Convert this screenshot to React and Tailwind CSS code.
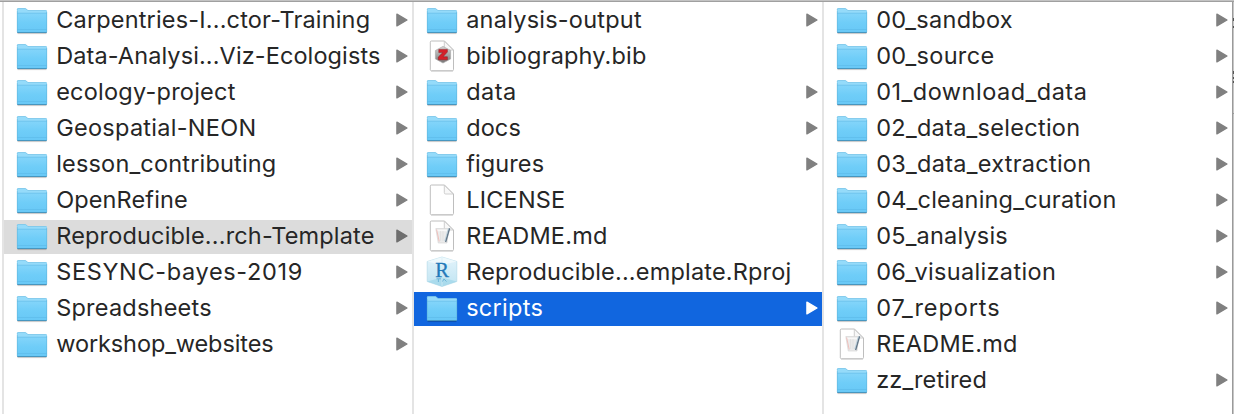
import React from "react";

const columns = [
  [
    { name: "Carpentries-I...ctor-Training", tracking: "tracking-[0.17px]", icon: "folder" },
    { name: "Data-Analysi...Viz-Ecologists", tracking: "tracking-[0.1px]", icon: "folder" },
    { name: "ecology-project", tracking: "tracking-[0.23px]", icon: "folder" },
    { name: "Geospatial-NEON", tracking: "tracking-[0.27px]", icon: "folder" },
    { name: "lesson_contributing", tracking: "tracking-[0.18px]", icon: "folder" },
    { name: "OpenRefine", tracking: "tracking-[0.12px]", icon: "folder" },
    { name: "Reproducible...rch-Template", tracking: "tracking-[0.17px]", icon: "folder", state: "path" },
    { name: "SESYNC-bayes-2019", tracking: "tracking-[0.66px]", icon: "folder" },
    { name: "Spreadsheets", tracking: "tracking-[0.22px]", icon: "folder" },
    { name: "workshop_websites", tracking: "tracking-[-0.1px]", icon: "folder" },
  ],
  [
    { name: "analysis-output", tracking: "tracking-[0.23px]", icon: "folder" },
    { name: "bibliography.bib", tracking: "tracking-[0.16px]", icon: "bib" },
    { name: "data", tracking: "tracking-[0.5px]", icon: "folder" },
    { name: "docs", tracking: "tracking-[0.1px]", icon: "folder" },
    { name: "figures", tracking: "tracking-[0.1px]", icon: "folder" },
    { name: "LICENSE", tracking: "tracking-[0.2px]", icon: "file" },
    { name: "README.md", tracking: "tracking-[0.2px]", icon: "markdown" },
    { name: "Reproducible...emplate.Rproj", tracking: "tracking-[0.18px]", icon: "rproj" },
    { name: "scripts", tracking: "tracking-[0.28px]", icon: "folder", state: "active" },
  ],
  [
    { name: "00_sandbox", tracking: "tracking-[0.28px]", icon: "folder" },
    { name: "00_source", tracking: "tracking-[0.33px]", icon: "folder" },
    { name: "01_download_data", tracking: "tracking-[0.5px]", icon: "folder" },
    { name: "02_data_selection", tracking: "tracking-[0.28px]", icon: "folder" },
    { name: "03_data_extraction", tracking: "tracking-[0.27px]", icon: "folder" },
    { name: "04_cleaning_curation", tracking: "tracking-[0.2px]", icon: "folder" },
    { name: "05_analysis", tracking: "tracking-[0.19px]", icon: "folder" },
    { name: "06_visualization", tracking: "tracking-[0.34px]", icon: "folder" },
    { name: "07_reports", tracking: "tracking-[0.92px]", icon: "folder" },
    { name: "README.md", tracking: "tracking-[0.2px]", icon: "markdown" },
    { name: "zz_retired", tracking: "tracking-[0.12px]", icon: "folder" },
  ],
];

function Gradients() {
  return (
    <svg width="0" height="0" className="absolute">
      <defs>
        <linearGradient id="folderFront" x1="0" y1="0" x2="0" y2="1">
          <stop offset="0" stopColor="#84d5fa" />
          <stop offset="0.5" stopColor="#6fcdf8" />
          <stop offset="1" stopColor="#68c8f6" />
        </linearGradient>
        <linearGradient id="cube" x1="0" y1="0" x2="0" y2="1">
          <stop offset="0" stopColor="#e3f3fb" />
          <stop offset="1" stopColor="#bfe4f2" />
        </linearGradient>
        <linearGradient id="badge" x1="0" y1="0" x2="0" y2="1">
          <stop offset="0" stopColor="#d6d6d6" />
          <stop offset="1" stopColor="#777777" />
        </linearGradient>
      </defs>
    </svg>
  );
}

function Folder() {
  return (
    <>
      <path d="M1.5 29.5H30.5" stroke="#000" strokeOpacity="0.2" strokeWidth="1.2" />
      <path d="M1 7V5.3Q1 4.2 2.1 4.2H9.2Q10 4.2 10.6 4.9L12 6.2H29.8Q31 6.2 31 7.4V10H1Z" fill="#95dbfa" />
      <path d="M1.3 6.5V5.3Q1.3 4.5 2.1 4.5H9.2Q9.9 4.5 10.4 5.1L11.8 6.5H29.8Q30.6 6.5 30.6 7.3" fill="none" stroke="#74c2e6" strokeWidth="0.7" />
      <path d="M1 9H31V27.7Q31 28.5 30.2 28.5H1.8Q1 28.5 1 27.7Z" fill="url(#folderFront)" />
      <path d="M1 9.2H31" stroke="#65bde8" strokeWidth="0.7" />
      <path d="M1.3 25.5H30.7" stroke="#5ab9e8" strokeWidth="0.6" />
      <path d="M1.3 7V28M30.7 8V28" stroke="#5fb5dc" strokeWidth="0.6" />
      <path d="M1.2 28.5H30.8" stroke="#4796bf" strokeWidth="1" />
    </>
  );
}

function Page() {
  return (
    <>
      <path d="M5 31.3H27" stroke="#000" strokeOpacity="0.13" />
      <path d="M5.5 1H18.5L27.5 10V29.5Q27.5 30.7 26.3 30.7H5.5Q4.3 30.7 4.3 29.5V2.2Q4.3 1 5.5 1Z" fill="#fff" stroke="#b7b7b7" strokeWidth="0.9" />
      <path d="M18.3 1.2V8.7Q18.3 10 19.6 10H27.2Z" fill="#f8f8f8" stroke="#c4c4c4" strokeWidth="0.8" />
    </>
  );
}

function Bib() {
  return (
    <>
      <Page />
      <path d="M17 6.4L24.6 10.5V18.9L17 23L9.4 18.9V10.5Z" fill="url(#badge)" stroke="#aaa" strokeWidth="0.7" />
      <path d="M12.8 9.4H21.4V12L17 16.8H21.4V19.8H12.3V17L16.8 12.6H12.8Z" fill="#d41f28" stroke="#8e1b20" strokeWidth="0.5" />
    </>
  );
}

function Markdown() {
  return (
    <>
      <Page />
      <path d="M9.8 8.5H22.7L21 23H12.3Z" fill="#ebebeb" stroke="#d6d6d6" strokeWidth="0.7" />
      <path d="M11 10.5H21" stroke="#f8f8f8" strokeWidth="1.4" />
      <path d="M10.6 9.5L13.2 21.5" stroke="#f0c0bc" strokeWidth="1" />
      <path d="M14.6 11V21M17 11V21" stroke="#dcdcdc" strokeWidth="0.7" />
      <path d="M23.6 8.3L19.6 22" stroke="#66798a" strokeWidth="1.5" />
      <path d="M22.4 8.5L18.7 21" stroke="#b0cddd" strokeWidth="0.7" />
    </>
  );
}

function Rproj() {
  return (
    <>
      <path d="M16 1L30.8 5.5V25.5L16 30.5L1.2 25.5V5.5Z" fill="url(#cube)" stroke="#b5dbea" strokeWidth="0.7" />
      <path d="M1.2 5.5L16 9L30.8 5.5L16 1Z" fill="#f1fafd" fillOpacity="0.8" />
      <path d="M1.2 25.5L16 21.5L30.8 25.5L16 30.5Z" fill="#8fcfe6" fillOpacity="0.5" />
      <path d="M16 1V8M16 21V30" stroke="#d5edf6" strokeWidth="0.7" />
      <text x="16" y="20.6" textAnchor="middle" fontFamily="Liberation Serif, serif" fontSize="20.5" fill="#2479b9" stroke="#2479b9" strokeWidth="0.3">R</text>
      <path d="M10.5 22.8H15M12.4 23V26M18 23L16.5 25.5M18 23L20.5 25.5" stroke="#6fb6d8" strokeWidth="1" fill="none" />
    </>
  );
}

const icons = { folder: Folder, file: Page, bib: Bib, markdown: Markdown, rproj: Rproj };

function Row({ name, tracking, icon, state }) {
  const Icon = icons[icon];
  const background = state === "active" ? "bg-[#1166df] text-white" : state === "path" ? "bg-[#dcdcdc] text-[#262626]" : "text-[#262626]";
  const arrow = state === "active" ? "fill-white stroke-white" : state === "path" ? "fill-[#6e6e6e] stroke-[#6e6e6e]" : "fill-[#808080] stroke-[#808080]";
  return (
    <li className={`flex h-[34px] items-center pr-1 pb-0.5 pl-3 ${background}`}>
      <svg viewBox="0 0 32 32" className="size-8 shrink-0">
        <Icon />
      </svg>
      <span className={`ml-[8.2px] grow whitespace-nowrap text-[23.5px] leading-8 ${tracking}`}>{name}</span>
      {icon === "folder" && (
        <svg viewBox="0 0 12 14" className={`h-3.5 w-3 shrink-0 ${arrow}`}>
          <path d="M0.9 1.1L11 7L0.9 12.9Z" strokeWidth="1.3" strokeLinejoin="round" />
        </svg>
      )}
    </li>
  );
}

export default function App() {
  return (
    <div className="flex h-[414px] w-[1234px] flex-col overflow-hidden bg-white font-[Inter,sans-serif]">
      <Gradients />
      <div className="h-0.5 shrink-0 border-b border-[#a0a0a0] bg-[#c3c3c3]" />
      <div className="flex grow">
        <div className="w-0.5" />
        {columns.map((rows, i) => (
          <ul key={i} className="flex w-[410px] shrink-0 flex-col gap-0.5 border-l-2 border-[#e4e4e4] pt-0.5">
            {rows.map((row) => (
              <Row key={row.name} {...row} />
            ))}
          </ul>
        ))}
        <svg width="2" height="412" viewBox="0 0 2 412" className="shrink-0">
          <path d="M0 0H2V412H0Z" fill="#c6c6c6" />
          <path d="M0 0H1V412H0Z" fill="#9a9a9a" />
          <path d="M1 16h1v3h-1ZM1 24h1v2h-1ZM1 69h1v3h-1ZM1 75h1v2h-1ZM1 79h1v2h-1Z" fill="#555" />
          <path d="M1 111h1v1h-1Z" fill="#999" />
        </svg>
      </div>
    </div>
  );
}
